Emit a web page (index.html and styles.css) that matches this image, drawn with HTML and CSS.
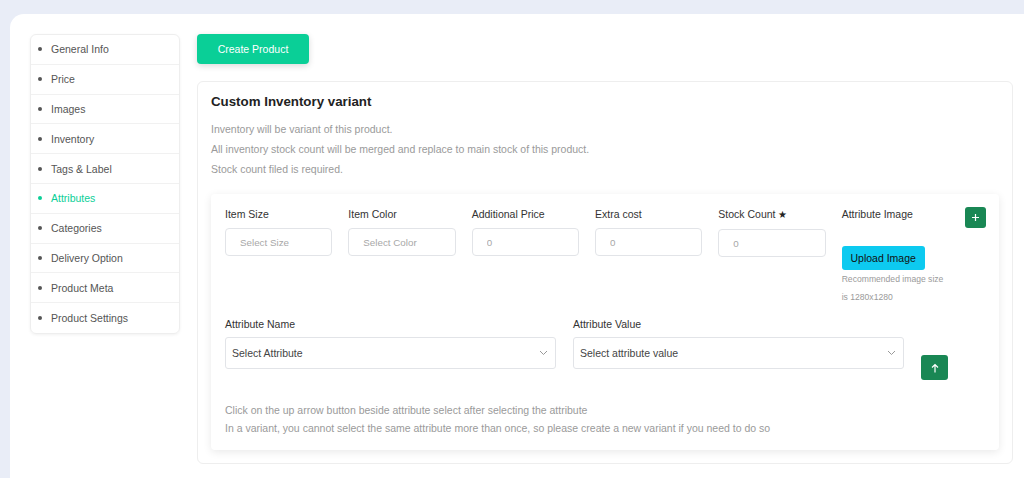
FILE: index.html
```html
<!DOCTYPE html>
<html lang="en">
<head>
    <meta charset="UTF-8">
    <meta name="viewport" content="width=device-width, initial-scale=1.0">
    <title>Product Attributes</title>
    <link rel="stylesheet" href="styles.css">
</head>
<body>
    <div class="page">
        <ul class="side-menu">
            <li class="side-item">General Info</li>
            <li class="side-item">Price</li>
            <li class="side-item">Images</li>
            <li class="side-item">Inventory</li>
            <li class="side-item">Tags &amp; Label</li>
            <li class="side-item active">Attributes</li>
            <li class="side-item">Categories</li>
            <li class="side-item">Delivery Option</li>
            <li class="side-item">Product Meta</li>
            <li class="side-item">Product Settings</li>
        </ul>

        <div class="main">
            <button class="btn-create">Create Product</button>

            <div class="card">
                <h5 class="card-title">Custom Inventory variant</h5>
                <p class="desc">Inventory will be variant of this product.</p>
                <p class="desc">All inventory stock count will be merged and replace to main stock of this product.</p>
                <p class="desc">Stock count filed is required.</p>

                <div class="variant">
                    <div class="variant-row">
                        <div class="field">
                            <label>Item Size</label>
                            <input class="input" placeholder="Select Size">
                        </div>
                        <div class="field">
                            <label>Item Color</label>
                            <input class="input" placeholder="Select Color">
                        </div>
                        <div class="field">
                            <label>Additional Price</label>
                            <input class="input" placeholder="0">
                        </div>
                        <div class="field">
                            <label>Extra cost</label>
                            <input class="input" placeholder="0">
                        </div>
                        <div class="field">
                            <label>Stock Count <span class="star">★</span></label>
                            <input class="input" placeholder="0">
                        </div>
                        <div class="field">
                            <label>Attribute Image</label>
                            <button class="btn-upload">Upload Image</button>
                            <p class="hint">Recommended image size<br>is 1280x1280</p>
                        </div>
                        <button class="btn-square btn-plus">
                            <svg width="9" height="9" viewBox="0 0 9 9"><path d="M4.5 1v7M1 4.5h7" stroke="#fff" stroke-width="1.2" fill="none"/></svg>
                        </button>
                    </div>

                    <div class="attr-row">
                        <div class="field">
                            <label>Attribute Name</label>
                            <div class="select">
                                <span>Select Attribute</span>
                                <svg width="9" height="6" viewBox="0 0 9 6"><path d="M1 1l3.5 3.5L8 1" stroke="#999" stroke-width="1" fill="none"/></svg>
                            </div>
                        </div>
                        <div class="field">
                            <label>Attribute Value</label>
                            <div class="select">
                                <span>Select attribute value</span>
                                <svg width="9" height="6" viewBox="0 0 9 6"><path d="M1 1l3.5 3.5L8 1" stroke="#999" stroke-width="1" fill="none"/></svg>
                            </div>
                        </div>
                        <button class="btn-square btn-up">
                            <svg width="8" height="10" viewBox="0 0 8 10"><path d="M4 9.5V1.5M1 4.5l3-3 3 3" stroke="#fff" stroke-width="1.2" fill="none"/></svg>
                        </button>
                    </div>

                    <p class="help">Click on the up arrow button beside attribute select after selecting the attribute</p>
                    <p class="help">In a variant, you cannot select the same attribute more than once, so please create a new variant if you need to do so</p>
                </div>
            </div>
        </div>
    </div>
</body>
</html>
```

FILE: styles.css
```css
:root {
    --bg-color: #e9edf7;
    --text-color: #333333;
    --muted-color: #9a9a9a;
    --border-color: #e6e8eb;
    --brand-color: #0acf97;
    --success-color: #198754;
    --info-color: #0dcaf0;
}

* {
    margin: 0;
    padding: 0;
    box-sizing: border-box;
}

body {
    font-family: 'Liberation Sans', Arial, sans-serif;
    font-size: 10.5px;
    color: var(--text-color);
    background: var(--bg-color);
    padding: 14px 0 0 10px;
    overflow: hidden;
}

.page {
    background: #ffffff;
    border-radius: 14px 0 0 0;
    min-height: 480px;
    padding: 20px 11px 0 20px;
    display: flex;
    align-items: flex-start;
    gap: 17px;
}

/* sidebar */
.side-menu {
    list-style: none;
    width: 150px;
    border: 1px solid #eeeeee;
    border-radius: 6px;
    box-shadow: 0 1px 3px rgba(0,0,0,0.06);
    overflow: hidden;
}

.side-item {
    height: 29.8px;
    display: flex;
    align-items: center;
    gap: 9px;
    padding-left: 7px;
    color: #555555;
    border-bottom: 1px solid #f1f1f1;
}

.side-item:last-child {
    border-bottom: none;
}

.side-item::before {
    content: '';
    width: 4px;
    height: 4px;
    border-radius: 50%;
    background: #555555;
}

.side-item.active {
    color: var(--brand-color);
}

.side-item.active::before {
    background: var(--brand-color);
}

/* main */
.main {
    flex: 1;
}

.btn-create {
    font-family: inherit;
    font-size: 10.5px;
    color: #ffffff;
    background: var(--brand-color);
    border: none;
    border-radius: 4px;
    width: 112px;
    height: 30px;
    box-shadow: 0 2px 6px rgba(0,0,0,0.15);
    margin-bottom: 17px;
}

.card {
    border: 1px solid #eeeeee;
    border-radius: 6px;
    padding: 12px 13px 13px 13px;
}

.card-title {
    font-size: 13.3px;
    font-weight: 700;
    color: #222222;
    line-height: 16px;
    margin-bottom: 9px;
}

.desc {
    color: var(--muted-color);
    line-height: 20px;
}

.variant {
    margin-top: 15px;
    padding: 12px 13px 13px 14px;
    border-radius: 4px;
    box-shadow: 0 2px 8px rgba(0,0,0,0.09);
}

.variant-row {
    display: grid;
    grid-template-columns: repeat(6, 1fr) 21px;
    gap: 16px;
    align-items: start;
}

.field label {
    display: block;
    line-height: 16px;
    margin-bottom: 6px;
    color: #333333;
}

.star {
    font-size: 10px;
    color: #222222;
}

.input {
    width: 100%;
    height: 28px;
    border: 1px solid #e2e4e8;
    border-radius: 4px;
    padding: 0 14px;
    font-family: inherit;
    font-size: 9.8px;
    outline: none;
}

.input::placeholder {
    color: #a8a8a8;
}

.btn-upload {
    margin-top: 18px;
    height: 24px;
    width: 83px;
    border: none;
    border-radius: 3px;
    background: var(--info-color);
    color: #111111;
    font-family: inherit;
    font-size: 10.5px;
}

.hint {
    font-size: 8.6px;
    line-height: 18px;
    color: var(--muted-color);
}

.btn-square {
    border: none;
    border-radius: 3px;
    background: var(--success-color);
    display: flex;
    align-items: center;
    justify-content: center;
}

.btn-plus {
    width: 21px;
    height: 21px;
    margin-top: 1px;
}

.attr-row {
    margin-top: 10px;
    display: grid;
    grid-template-columns: 331px 331px 27px;
    gap: 17px;
    align-items: start;
}

.attr-row .field label {
    margin-bottom: 5px;
}

.select {
    height: 32px;
    border: 1px solid #e2e4e8;
    border-radius: 3px;
    padding: 0 7px 0 6px;
    display: flex;
    align-items: center;
    justify-content: space-between;
    color: #444444;
}

.btn-up {
    width: 27px;
    height: 25px;
    margin-top: 39px;
}

.help {
    color: var(--muted-color);
    line-height: 18px;
}

.attr-row + .help {
    margin-top: 21px;
}
```
